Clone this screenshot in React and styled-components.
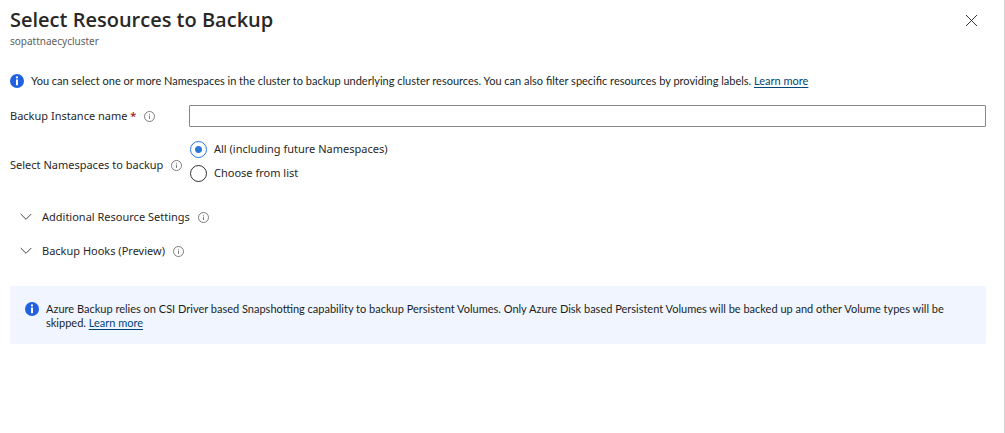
import React, { useState } from "react";
import styled, { createGlobalStyle } from "styled-components";

const GlobalStyle = createGlobalStyle`
  *, *::before, *::after { box-sizing: border-box; }
  body {
    margin: 0;
    background: #fff;
    color: #292827;
    font-family: "Noto Sans", "Open Sans", sans-serif;
    font-size: 11px;
    line-height: 16px;
  }
`;

const Panel = styled.main`
  min-height: 100vh;
  padding: 8px 18px 24px 10px;
  border-right: 1px solid #d2d0ce;
`;

const Header = styled.header`
  display: flex;
  justify-content: space-between;
  align-items: flex-start;
`;

const Title = styled.h1`
  margin: 0;
  font-family: "Open Sans", sans-serif;
  font-size: 20px;
  line-height: 24px;
  font-weight: 600;
`;

const Subtitle = styled.p`
  margin: 0;
  padding-top: 1px;
  font-size: 10px;
  line-height: 16px;
  color: #605e5c;
`;

const CloseButton = styled.button`
  display: flex;
  padding: 6px 8px;
  border: 0;
  background: none;
  color: #323130;
  cursor: pointer;
`;

const Message = styled.div`
  display: flex;
  align-items: flex-start;
  gap: 7px;
  font-family: Lato, sans-serif;
  font-size: 11px;
  line-height: 14px;
  color: #201f1e;

  svg { flex: none; }
  p { margin: 0; }
`;

const Intro = styled(Message)`
  margin-top: 25px;
`;

const Banner = styled(Message)`
  margin-top: 27px;
  padding: 16px 15px 14px;
  border-radius: 2px;
  background: #f0f5ff;
`;

const Link = styled.a`
  color: #004578;
  text-decoration: underline;
  text-underline-offset: 2px;
`;

const Form = styled.form`
  margin-top: 17px;
`;

const Field = styled.div`
  display: grid;
  grid-template-columns: 179px 1fr;
  align-items: center;
`;

const NamespaceField = styled(Field)`
  padding-top: 10px;
`;

const LabelGroup = styled.div`
  display: flex;
  align-items: center;
  gap: 8px;
  white-space: nowrap;

  svg { flex: none; }
`;

const NamespaceLabel = styled(LabelGroup)`
  padding-top: 10px;
`;

const Required = styled.span`
  color: #a4262c;
  font-weight: 600;
`;

const TextInput = styled.input`
  width: 100%;
  height: 22px;
  padding: 0 8px;
  border: 1px solid #8a8886;
  border-radius: 1px;
  font: inherit;
`;

const RadioGroup = styled.div`
  display: flex;
  flex-direction: column;
  gap: 4px;
  padding: 2px 1px 0;
`;

const RadioLabel = styled.label`
  display: flex;
  align-items: center;
  gap: 7px;
  height: 20px;
`;

const Radio = styled.input`
  appearance: none;
  width: 17px;
  height: 17px;
  margin: 0;
  border: 1px solid #323130;
  border-radius: 50%;

  &:checked {
    border-color: #2776dc;
    background: radial-gradient(circle, #2776dc 3px, transparent 4px);
  }
`;

const Sections = styled.div`
  display: flex;
  flex-direction: column;
  gap: 18px;
  margin-top: 26px;
  padding-left: 10px;
`;

const Section = styled.div`
  display: flex;
  align-items: center;
  gap: 8px;
`;

const SectionToggle = styled.button`
  display: flex;
  align-items: center;
  gap: 10px;
  padding: 0;
  border: 0;
  background: none;
  color: inherit;
  font: inherit;
  cursor: pointer;
`;

const InfoOutline = () => (
  <svg width="11" height="11" viewBox="0 0 11 11" fill="none" stroke="#605e5c" aria-hidden="true">
    <circle cx="5.5" cy="5.5" r="5" strokeWidth="0.8" />
    <path d="M5.5 4.6V8M5.5 2.8V3.7" strokeWidth="0.8" />
  </svg>
);

const InfoFilled = () => (
  <svg width="14" height="14" viewBox="0 0 14 14" aria-hidden="true">
    <circle cx="7" cy="7" r="7" fill="#2160e0" />
    <circle cx="7" cy="3.4" r="1.1" fill="#fff" />
    <path d="M6 5.6h2v5.6H6z" fill="#fff" />
  </svg>
);

const Chevron = () => (
  <svg width="12" height="12" viewBox="0 0 12 12" fill="none" stroke="#484644" aria-hidden="true">
    <path d="M.7 3 6 8.3 11.3 3" />
  </svg>
);

const SECTIONS = ["Additional Resource Settings", "Backup Hooks (Preview)"];
const NAMESPACES = [
  { value: "all", text: "All (including future Namespaces)" },
  { value: "list", text: "Choose from list" },
];

export default function App() {
  const [scope, setScope] = useState("all");

  return (
    <>
      <GlobalStyle />
      <Panel>
        <Header>
          <div>
            <Title>Select Resources to Backup</Title>
            <Subtitle>sopattnaecycluster</Subtitle>
          </div>
          <CloseButton type="button" aria-label="Close">
            <svg width="13" height="13" viewBox="0 0 13 13" fill="none" stroke="currentColor" aria-hidden="true">
              <path d="M1 1l11 11M12 1L1 12" />
            </svg>
          </CloseButton>
        </Header>

        <Intro>
          <InfoFilled />
          <p>
            You can select one or more Namespaces in the cluster to backup underlying cluster resources. You can also
            filter specific resources by providing labels. <Link href="#namespaces">Learn more</Link>
          </p>
        </Intro>

        <Form>
          <Field>
            <LabelGroup>
              <label htmlFor="instance-name">
                Backup Instance name <Required>*</Required>
              </label>
              <InfoOutline />
            </LabelGroup>
            <TextInput id="instance-name" type="text" required />
          </Field>

          <NamespaceField role="radiogroup" aria-labelledby="namespaces-label">
            <NamespaceLabel>
              <span id="namespaces-label">Select Namespaces to backup</span>
              <InfoOutline />
            </NamespaceLabel>
            <RadioGroup>
              {NAMESPACES.map(({ value, text }) => (
                <RadioLabel key={value}>
                  <Radio
                    type="radio"
                    name="namespaces"
                    value={value}
                    checked={scope === value}
                    onChange={() => setScope(value)}
                  />
                  {text}
                </RadioLabel>
              ))}
            </RadioGroup>
          </NamespaceField>

          <Sections>
            {SECTIONS.map((name) => (
              <Section key={name}>
                <SectionToggle type="button" aria-expanded="false">
                  <Chevron />
                  {name}
                </SectionToggle>
                <InfoOutline />
              </Section>
            ))}
          </Sections>
        </Form>

        <Banner>
          <InfoFilled />
          <p>
            Azure Backup relies on CSI Driver based Snapshotting capability to backup Persistent Volumes. Only Azure
            Disk based Persistent Volumes will be backed up and other Volume types will be skipped.{" "}
            <Link href="#volumes">Learn more</Link>
          </p>
        </Banner>
      </Panel>
    </>
  );
}
